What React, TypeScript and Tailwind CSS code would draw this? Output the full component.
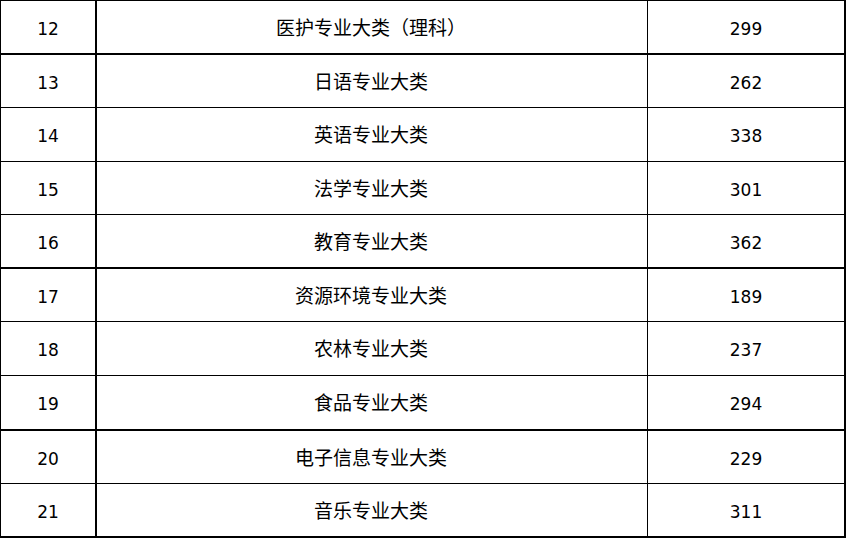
const rows = [
  { no: "12", name: "医护专业大类（理科）", score: "299", cls: "h-[54px] border-b-2" },
  { no: "13", name: "日语专业大类", score: "262", cls: "h-[53px] border-b" },
  { no: "14", name: "英语专业大类", score: "338", cls: "h-[54px] border-b" },
  { no: "15", name: "法学专业大类", score: "301", cls: "h-[53px] border-b" },
  { no: "16", name: "教育专业大类", score: "362", cls: "h-[54px] border-b-2" },
  { no: "17", name: "资源环境专业大类", score: "189", cls: "h-[53px] border-b" },
  { no: "18", name: "农林专业大类", score: "237", cls: "h-[54px] border-b" },
  { no: "19", name: "食品专业大类", score: "294", cls: "h-[55px] border-b-2" },
  { no: "20", name: "电子信息专业大类", score: "229", cls: "h-[53px] border-b" },
  { no: "21", name: "音乐专业大类", score: "311", cls: "h-[54px] border-b-2" },
];

export default function App() {
  return (
    <div className="w-[847px] h-[539px] bg-white text-black">
      <div className="w-[846px] border-t border-l border-black">
        {rows.map((r) => (
          <div key={r.no} className={`flex border-black ${r.cls}`}>
            <div className="w-[96px] flex items-center justify-center pt-[5px] border-r-2 border-black font-['DejaVu_Sans',sans-serif] text-[17px]">
              {r.no}
            </div>
            <div className="w-[551px] flex items-center justify-center border-r border-black font-['Noto_Sans_CJK_SC',sans-serif] text-[19px] pr-[2px]">
              {r.name}
            </div>
            <div className="w-[198px] flex items-center justify-center pt-[5px] border-r-2 border-black font-['DejaVu_Sans',sans-serif] text-[17px]">
              {r.score}
            </div>
          </div>
        ))}
      </div>
    </div>
  );
}
